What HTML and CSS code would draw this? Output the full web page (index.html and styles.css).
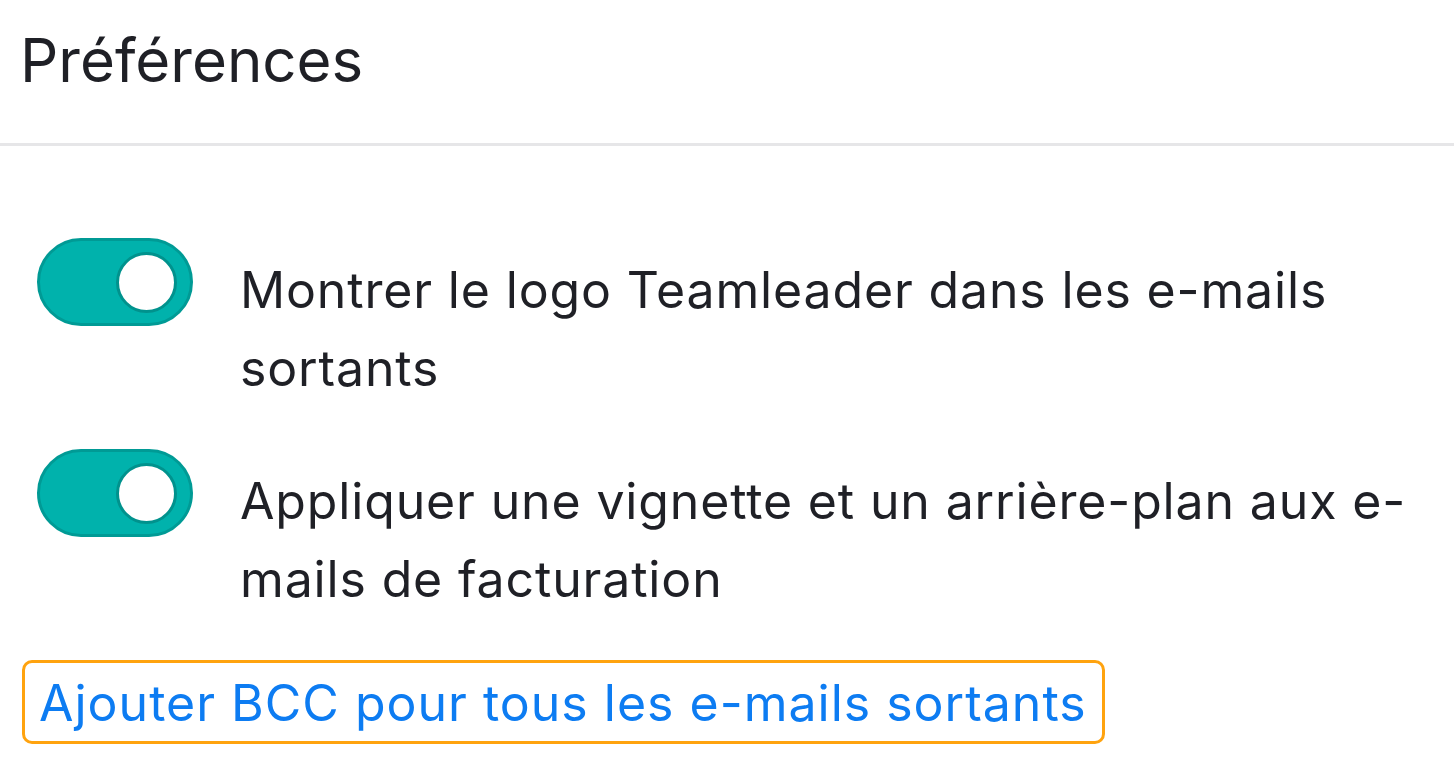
FILE: index.html
```html
<!DOCTYPE html>
<html lang="fr">
<head>
  <meta charset="UTF-8">
  <title>Préférences</title>
  <link rel="stylesheet" href="styles.css">
</head>
<body>
  <div class="panel">
    <div class="panel-header">
      <h2>Préférences</h2>
    </div>

    <div class="panel-body">
      <label class="pref-row">
        <span class="toggle on"><span class="knob"></span></span>
        <span class="pref-label">Montrer le logo Teamleader dans les e-mails sortants</span>
      </label>

      <label class="pref-row">
        <span class="toggle on"><span class="knob"></span></span>
        <span class="pref-label">Appliquer une vignette et un arrière-plan aux e-mails de facturation</span>
      </label>

      <a href="#" class="bcc-link">Ajouter BCC pour tous les e-mails sortants</a>
    </div>
  </div>
</body>
</html>
```

FILE: styles.css
```css
body {
  font-family: Inter, 'Noto Sans', sans-serif;
  background: #ffffff;
  color: #1f2026;
  margin: 0;
}

.panel-header {
  height: 146px;
  padding: 0 20px;
  border-bottom: 3px solid #e6e6e8;
  box-sizing: border-box;
}

.panel-header h2 {
  margin: 0;
  padding-top: 22px;
  font-size: 60px;
  font-weight: 400;
  line-height: 76px;
}

.panel-body {
  padding: 92px 30px 0 22px;
}

.pref-row {
  display: flex;
  align-items: flex-start;
  gap: 47px;
  margin-bottom: 42px;
  padding-left: 15px;
}

.toggle {
  flex: none;
  position: relative;
  width: 156px;
  height: 88px;
  border-radius: 44px;
  background: #00b2ac;
  border: 3px solid #009a95;
  box-sizing: border-box;
}

.knob {
  position: absolute;
  top: 11px;
  right: 13px;
  width: 61px;
  height: 61px;
  border-radius: 50%;
  background: #ffffff;
  border: 3px solid #00928d;
  box-sizing: border-box;
}

.pref-label {
  font-size: 50px;
  letter-spacing: 0.85px;
  line-height: 78px;
  margin-top: 13px;
}

.bcc-link {
  display: inline-block;
  padding: 0 15px 0 14px;
  height: 84px;
  line-height: 80px;
  font-size: 50px;
  letter-spacing: 1px;
  color: #0d7cf2;
  text-decoration: none;
  border: 3px solid #ffa30f;
  border-radius: 10px;
  box-sizing: border-box;
}
```
